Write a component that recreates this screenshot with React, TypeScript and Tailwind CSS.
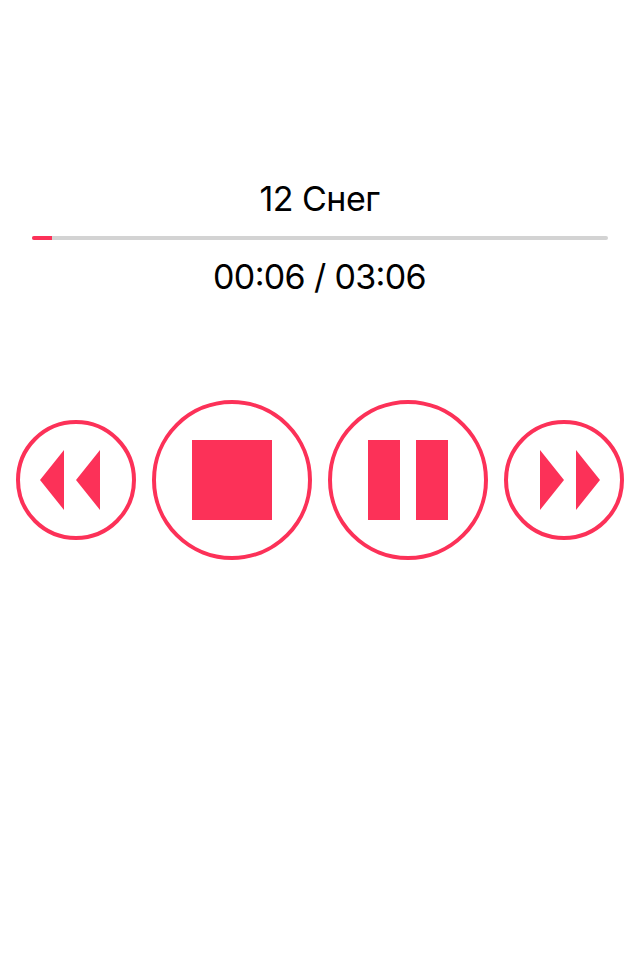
import React from "react";

function SkipIcon({ forward = false }: { forward?: boolean }) {
  return (
    <svg width="60" height="60" viewBox="0 0 60 60" fill="currentColor">
      {forward ? (
        <path d="M0 0L24 30L0 60ZM36 0L60 30L36 60Z" />
      ) : (
        <path d="M24 0L0 30L24 60ZM60 0L36 30L60 60Z" />
      )}
    </svg>
  );
}

export default function App() {
  return (
    <main className="flex h-[960px] w-[640px] flex-col bg-white font-['Inter',sans-serif] text-black">
      <section className="flex flex-col items-center px-8 pt-[178px] text-[34px] leading-[42px] [font-feature-settings:'calt']">
        <h1 className="pr-px tracking-[-0.55px]">12 Снег</h1>
        <div className="mt-4 h-1 w-full overflow-hidden rounded-full bg-[#d3d3d3]">
          <div className="h-full w-5 bg-[#fc3158]" />
        </div>
        <p className="mt-4 pr-px tracking-[-0.65px]">00:06 / 03:06</p>
      </section>
      <nav className="mt-[102px] flex items-center justify-between px-4 text-[#fc3158]">
        <button aria-label="Previous" className="flex size-[120px] items-center rounded-full border-4 border-current pl-5">
          <SkipIcon />
        </button>
        <button aria-label="Stop" className="flex size-40 items-center justify-center rounded-full border-4 border-current">
          <span className="size-20 bg-current" />
        </button>
        <button aria-label="Pause" className="flex size-40 items-center justify-center gap-4 rounded-full border-4 border-current">
          <span className="h-20 w-8 bg-current" />
          <span className="h-20 w-8 bg-current" />
        </button>
        <button aria-label="Next" className="flex size-[120px] items-center justify-end rounded-full border-4 border-current pr-5">
          <SkipIcon forward />
        </button>
      </nav>
    </main>
  );
}
